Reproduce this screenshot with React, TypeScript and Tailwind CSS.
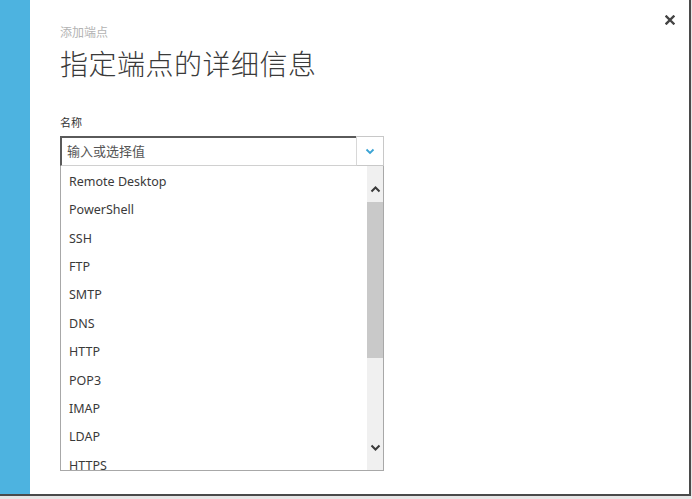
import React from "react";

const items = ["Remote Desktop", "PowerShell", "SSH", "FTP", "SMTP", "DNS", "HTTP", "POP3", "IMAP", "LDAP", "HTTPS"];

export default function App() {
  return (
    <div className="w-[692px] h-[499px] bg-[#e6e6e6] overflow-hidden" style={{ fontFamily: '"Noto Sans", "Noto Sans CJK SC", sans-serif' }}>
      <div className="w-[691px] h-[496px] flex border-r-2 border-b-2 border-[#4a4a4a] bg-white">
        <div className="w-[30px] shrink-0 bg-[#4db3e0]" />
        <div className="flex-1 relative pl-[30px] pt-[25px]">
          <button className="absolute right-[12px] top-[13px] w-[14px] h-[14px] flex items-center justify-center">
            <svg width="10" height="10" viewBox="0 0 10 10">
              <path d="M1.5 1.5 L8.5 8.5 M8.5 1.5 L1.5 8.5" stroke="#444" strokeWidth="2.4" strokeLinecap="square" />
            </svg>
          </button>
          <div className="text-[12px] leading-[16px] text-[#b3b3b3]">添加端点</div>
          <h1 className="mt-[5px] text-[28px] leading-[36px] text-[#3a3a3a] font-light tracking-[0.5px]">指定端点的详细信息</h1>
          <div className="mt-[33px] text-[11px] leading-[16px] text-[#333]">名称</div>
          <div className="mt-[5px] w-[324px]">
            <div className="flex h-[30px]">
              <div className="flex-1 border-t-2 border-l-2 border-b border-[#5a5a5a] border-b-[#d0d0d0] flex items-center pl-[5px] text-[13px] text-[#555]">
                输入或选择值
              </div>
              <div className="w-[28px] border border-[#c8c8c8] border-l-[#d8d8d8] flex items-center justify-center">
                <svg width="10" height="7" viewBox="0 0 10 7">
                  <path d="M1.5 1.5 L5 5 L8.5 1.5" fill="none" stroke="#3aa3d4" strokeWidth="1.8" />
                </svg>
              </div>
            </div>
            <div className="h-[305px] flex border-l border-r border-b border-[#a8a8a8] overflow-hidden">
              <div className="flex-1 pt-[2px]">
                {items.map((it) => (
                  <div key={it} className="h-[28.4px] flex items-center pl-[8px] text-[12.5px] text-[#3a3a3a]">{it}</div>
                ))}
              </div>
              <div className="w-[16px] bg-[#f0f0f0] flex flex-col items-center">
                <div className="h-[36px] flex items-center justify-center pt-[10px]">
                  <svg width="11" height="8" viewBox="0 0 11 8">
                    <path d="M1.5 6.5 L5.5 2.5 L9.5 6.5" fill="none" stroke="#3a3a3a" strokeWidth="2" />
                  </svg>
                </div>
                <div className="w-full h-[156px] bg-[#c9c9c9]" />
                <div className="flex-1" />
                <div className="h-[28px] flex items-start justify-center pt-[2px]">
                  <svg width="11" height="8" viewBox="0 0 11 8">
                    <path d="M1.5 1.5 L5.5 5.5 L9.5 1.5" fill="none" stroke="#3a3a3a" strokeWidth="2" />
                  </svg>
                </div>
              </div>
            </div>
          </div>
        </div>
      </div>
    </div>
  );
}
